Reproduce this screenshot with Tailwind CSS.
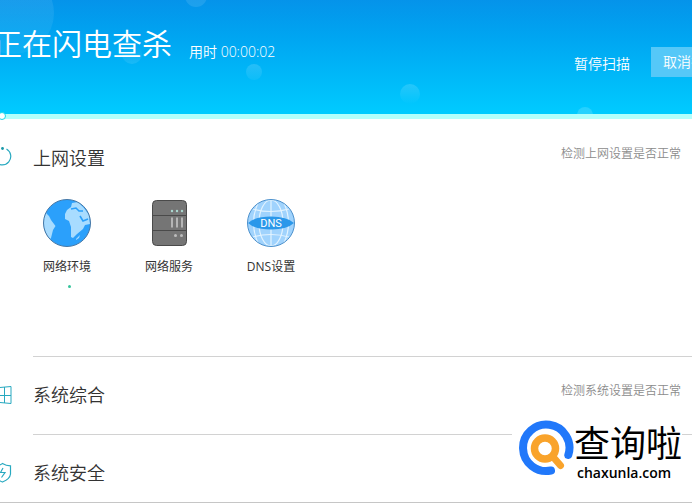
<!DOCTYPE html>
<html lang="zh-CN">

<head>
  <meta charset="UTF-8" />
  <meta name="viewport" content="width=device-width, initial-scale=1.0" />
  <title>正在闪电查杀</title>
  <script src="https://cdn.jsdelivr.net/npm/@tailwindcss/browser@4"></script>
  <style>
    body {
      font-family: 'Open Sans', 'Noto Sans CJK SC', sans-serif;
    }
  </style>
</head>

<body class="bg-white text-[#333] overflow-hidden">

  <!-- Scan status -->
  <header class="relative overflow-hidden h-[114px] bg-linear-to-b from-[#0593ea] to-[#00cbff] text-white">
    <!-- Bubbles -->
    <span class="absolute -left-7 -top-7 size-[82px] rounded-full bg-linear-to-b from-white/10 to-white/5"></span>
    <span class="absolute left-[185px] -top-[15px] size-[22px] rounded-full bg-white/10"></span>
    <span class="absolute left-[122px] top-[44px] size-5 rounded-full bg-linear-to-b from-white/0 to-white/10"></span>
    <span class="absolute left-[246px] top-16 size-4 rounded-full bg-linear-to-b from-white/15 to-white/5"></span>
    <span class="absolute left-[400px] top-[84px] size-5 rounded-full bg-linear-to-b from-white/15 to-white/0"></span>
    <span class="absolute left-[577px] top-[107px] size-4 rounded-full bg-white/15"></span>
    <span class="absolute -left-4 -top-[15px] text-xs leading-5">电脑管家</span>

    <div class="relative flex items-start justify-between -ml-2 pt-6">
      <div class="flex items-start gap-[17px]">
        <h1 class="text-[30px] leading-10 font-[350] whitespace-nowrap">正在闪电查杀</h1>
        <p class="mt-[18px] text-sm leading-5 font-[350] whitespace-nowrap">用时 00:00:02</p>
      </div>
      <div class="flex items-start gap-[21px] -mr-[39px] pt-[23px]">
        <button type="button" class="mt-[7px] text-sm leading-5 font-[350] whitespace-nowrap">暂停扫描</button>
        <button type="button" class="h-[30px] px-3 bg-[#55c8f8] text-sm leading-5 font-[350] whitespace-nowrap">取消扫描</button>
      </div>
    </div>
  </header>

  <!-- Progress -->
  <div class="relative h-[5px] bg-[#b3fffb]">
    <span class="absolute -left-0.5 -top-0.5 size-2 rounded-full bg-white border border-[#19d9ea]"></span>
  </div>

  <main class="pt-px">
    <section>
      <div class="flex items-start gap-[21px] -ml-3 pt-6">
        <svg class="size-6 mt-0.5" viewBox="0 0 24 24" fill="none" stroke="#28a9c0" stroke-width="1.2">
          <path d="M18.500 3A8.500 8.500 0 1 1 10 3" />
          <circle cx="14.500" cy="2.500" r="1.400" fill="#1898a8" stroke="none" />
        </svg>
        <div class="flex flex-1 items-start justify-between pr-[11px]">
          <h2 class="text-lg leading-7 font-[350]">上网设置</h2>
          <p class="text-xs leading-5 font-[350] text-[#8c8c8c]">检测上网设置是否正常</p>
        </div>
      </div>

      <ul class="flex mt-[27px] pl-4 pb-[68px]">
        <li class="w-[102px] flex flex-col items-center">
          <svg class="size-12" viewBox="0 0 48 48">
            <circle cx="24" cy="24" r="23.500" fill="#2ba0fb" />
            <path d="M3 14L6 17L8 21L12.500 27L10 31L8 39L7 40A23.500 23.500 0 0 1 3 14Z" fill="#a8dcff" />
            <path d="M24 11L28 8L29 4L35 3L41 9L46 16L47 25L42 26L40 30L34 35L30 39L28 38L28 28L26 22L22 20L22 15Z" fill="#a8dcff" />
            <path d="M28 10L33 9L36 12L40 12M37 17L40 22L45 20" fill="none" stroke="#2ba0fb" stroke-width="1.600" />
            <path d="M33 40L37 36L36 39L33 41Z" fill="#a8dcff" />
            <circle cx="24" cy="24" r="23.500" fill="none" stroke="#4778a6" />
          </svg>
          <span class="mt-2.5 text-xs leading-5">网络环境</span>
          <span class="mt-2 ml-1 size-[3px] rounded-full bg-[#35c49c]"></span>
        </li>
        <li class="w-[102px] flex flex-col items-center">
          <svg class="size-12" viewBox="0 0 48 48">
            <rect x="7.500" y="1.500" width="34" height="45" rx="4" fill="#757575" stroke="#4a4a4a" />
            <path d="M8 16.500H41M8 31.500H41" stroke="#4a4a4a" />
            <g fill="#a9d8cf">
              <circle cx="27" cy="12" r="1.200" />
              <circle cx="32" cy="12" r="1.200" />
              <circle cx="37" cy="12" r="1.200" />
            </g>
            <path d="M27 18.500V28.500M32 18.500V28.500M37 18.500V28.500" stroke="#b5b5b5" stroke-width="2" />
            <circle cx="30.500" cy="36.500" r="1.500" fill="#bdbdbd" />
            <circle cx="36.500" cy="36.500" r="1.500" fill="#bdbdbd" />
          </svg>
          <span class="mt-2.5 text-xs leading-5">网络服务</span>
        </li>
        <li class="w-[102px] flex flex-col items-center">
          <svg class="size-12" viewBox="0 0 48 48">
            <circle cx="24" cy="24" r="23.500" fill="#a0d3fd" />
            <g fill="none" stroke="#e2f3ff" stroke-width="1.200">
              <ellipse cx="24" cy="24" rx="12" ry="23" />
              <path d="M24 1V47M11 4Q2 24 11 44M37 4Q46 24 37 44" />
              <path d="M6 10Q24 15 42 10M6 38Q24 33 42 38" />
            </g>
            <path d="M1 24Q8 17.500 24 17.500T47 24Q40 30.500 24 30.500T1 24Z" fill="#2b98ea" />
            <circle cx="24" cy="24" r="23.500" fill="none" stroke="#4b90cc" />
            <text x="24" y="28" text-anchor="middle" font-size="11" fill="#fff" font-family="Roboto, sans-serif">DNS</text>
          </svg>
          <span class="mt-2.5 text-xs leading-5">DNS设置</span>
        </li>
      </ul>
      <hr class="ml-[33px] border-[#d2d2d2]" />
    </section>

    <section>
      <div class="flex items-start gap-[21px] -ml-3 pt-6 pb-[25px]">
        <svg class="size-6 mt-0.5" viewBox="0 0 24 24" fill="none" stroke="#28a9c0">
          <path d="M6.500 5L23 3.500V20.500L6.500 19ZM6.500 12.500H23M16.500 4V20" />
        </svg>
        <div class="flex flex-1 items-start justify-between pr-[11px]">
          <h2 class="text-lg leading-7 font-[350]">系统综合</h2>
          <p class="text-xs leading-5 font-[350] text-[#8c8c8c]">检测系统设置是否正常</p>
        </div>
      </div>
      <hr class="ml-[33px] border-[#d2d2d2]" />
    </section>

    <section>
      <div class="flex items-start gap-[21px] -ml-3 pt-6 pb-[15px]">
        <svg class="size-6 mt-0.5" viewBox="0 0 24 24" fill="none" stroke="#28a9c0" stroke-width="1.200">
          <path d="M14.500 2.500Q18 4.800 22.500 4.800V13Q22 18 14.500 21Q7 18 6.500 13V4.800Q11 4.800 14.500 2.500Z" />
          <path d="M15 7L12.500 11.500H17L13.500 16.500" />
        </svg>
        <h2 class="text-lg leading-7 font-[350]">系统安全</h2>
      </div>
      <hr class="border-[#c6c6c6]" />
    </section>
  </main>

  <!-- Site badge -->
  <a href="#" class="absolute right-[10px] top-[418px] flex items-start bg-white pl-1.5 text-black">
    <svg class="size-[56px] mt-0.5" viewBox="0 0 56 56" fill="none" stroke-linecap="round">
      <path d="M33 50.500A23.200 23.200 0 1 1 50.300 35" stroke="#2178fa" stroke-width="8" />
      <circle cx="27" cy="28.500" r="10.500" stroke="#f9a32b" stroke-width="7.500" />
      <path d="M36 38L42.500 45.500" stroke="#f9a32b" stroke-width="7" />
    </svg>
    <span class="flex flex-col items-start pt-1 pb-1">
      <span class="text-[36px] leading-[43px]">查询啦</span>
      <span class="ml-[3px] text-sm leading-4 font-semibold">chaxunla.com</span>
    </span>
  </a>
</body>

</html>
